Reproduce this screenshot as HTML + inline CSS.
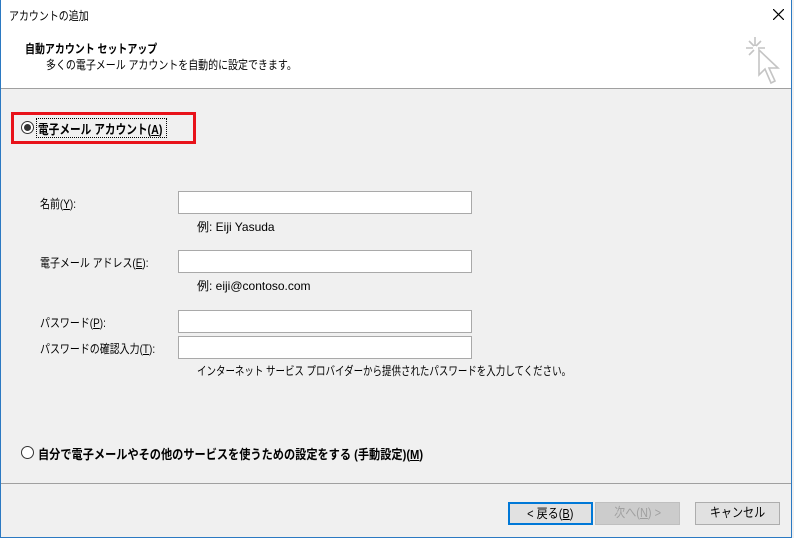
<!DOCTYPE html>
<html><head><meta charset="utf-8"><style>
*{margin:0;padding:0;box-sizing:border-box}
body{width:794px;height:538px;background:#f0f0f0;font-family:"Liberation Sans","Noto Sans CJK JP",sans-serif;font-size:12px;color:#000;position:relative;overflow:hidden}
.win{position:absolute;left:0;top:0;width:792px;height:538px;border:1px solid #2b79c2;border-top:none;background:#f0f0f0}
.head{position:absolute;left:0;top:0;width:790px;height:89px;background:#fff;border-bottom:1px solid #a0a0a0}
.a{position:absolute;white-space:nowrap;transform-origin:0 50%}
.c{transform:scaleX(.83)}
.inp{position:absolute;left:177px;width:294px;height:23px;background:#fff;border:1px solid #a9a9a9}
.btn{position:absolute;top:502px;height:23px;width:85px;border:1px solid #adadad;background:#e1e1e1;text-align:center;line-height:20px;font-size:13px}
.btn span{display:inline-block;transform:scaleX(.85)}
u{text-decoration:underline}
.rad{position:absolute;width:13px;height:13px;border:1px solid #333;border-radius:50%;background:#fff}
</style></head><body>
<div class="win">
<div class="head">
<div class="a c" style="left:8px;top:7px">アカウントの追加</div>
<svg style="position:absolute;left:772px;top:9px" width="11" height="11"><path d="M0 0L11 11M11 0L0 11" stroke="#000" stroke-width="1.2"/></svg>
<div class="a c" style="left:24px;top:40px;font-weight:bold">自動アカウント セットアップ</div>
<div class="a c" style="left:45px;top:56px">多くの電子メール アカウントを自動的に設定できます。</div>
<svg style="position:absolute;left:735px;top:30px" width="50" height="58" viewBox="0 0 50 58"><g stroke="#c4c4c4" stroke-width="1.6" fill="none"><path d="M19 7v9M19 22v0M10 18h7M22 18h7M13 11l5 5M25 11l-5 5M13 25l5-5"/><path d="M23 20L23 45L29 39L35 53L39 51L33 38L42 38Z" fill="#fff"/></g></svg>
</div>
<div style="position:absolute;left:10px;top:112px;width:185px;height:32px;border:3px solid #e8121a"></div>
<div class="rad" style="left:20px;top:121px"><div style="position:absolute;left:2px;top:2px;width:7px;height:7px;border-radius:50%;background:#333"></div></div>
<div class="a" style="left:36px;top:119px;width:129px;height:18px;outline:1px dotted #000"></div>
<div class="a" style="left:37px;top:119px;font-weight:bold;font-size:13px;transform:scaleX(.82)">電子メール アカウント(<u>A</u>)</div>
<div class="a c" style="left:39px;top:195px">名前(<u>Y</u>):</div>
<div class="inp" style="top:191px"></div>
<div class="a" style="left:196px;top:218px">例: Eiji Yasuda</div>
<div class="a c" style="left:39px;top:254px">電子メール アドレス(<u>E</u>):</div>
<div class="inp" style="top:250px"></div>
<div class="a" style="left:196px;top:277px">例: eiji@contoso.com</div>
<div class="a c" style="left:39px;top:314px">パスワード(<u>P</u>):</div>
<div class="inp" style="top:310px"></div>
<div class="a c" style="left:39px;top:340px">パスワードの確認入力(<u>T</u>):</div>
<div class="inp" style="top:336px"></div>
<div class="a" style="left:196px;top:362px;transform:scaleX(.79)">インターネット サービス プロバイダーから提供されたパスワードを入力してください。</div>
<div class="rad" style="left:20px;top:446px"></div>
<div class="a" style="left:37px;top:444px;font-weight:bold;font-size:13px;transform:scaleX(.86)">自分で電子メールやその他のサービスを使うための設定をする (手動設定)(<u>M</u>)</div>
<div style="position:absolute;left:0;top:483px;width:790px;height:1px;background:#a0a0a0"></div>
<div class="btn" style="left:507px;border:2px solid #0078d7;line-height:19px"><span>&lt; 戻る(<u>B</u>)</span></div>
<div class="btn" style="left:594px;color:#a0a0a0;background:#ccc;border-color:#bfbfbf"><span>次へ(<u>N</u>) &gt;</span></div>
<div class="btn" style="left:694px"><span>キャンセル</span></div>
</div>
</body></html>
